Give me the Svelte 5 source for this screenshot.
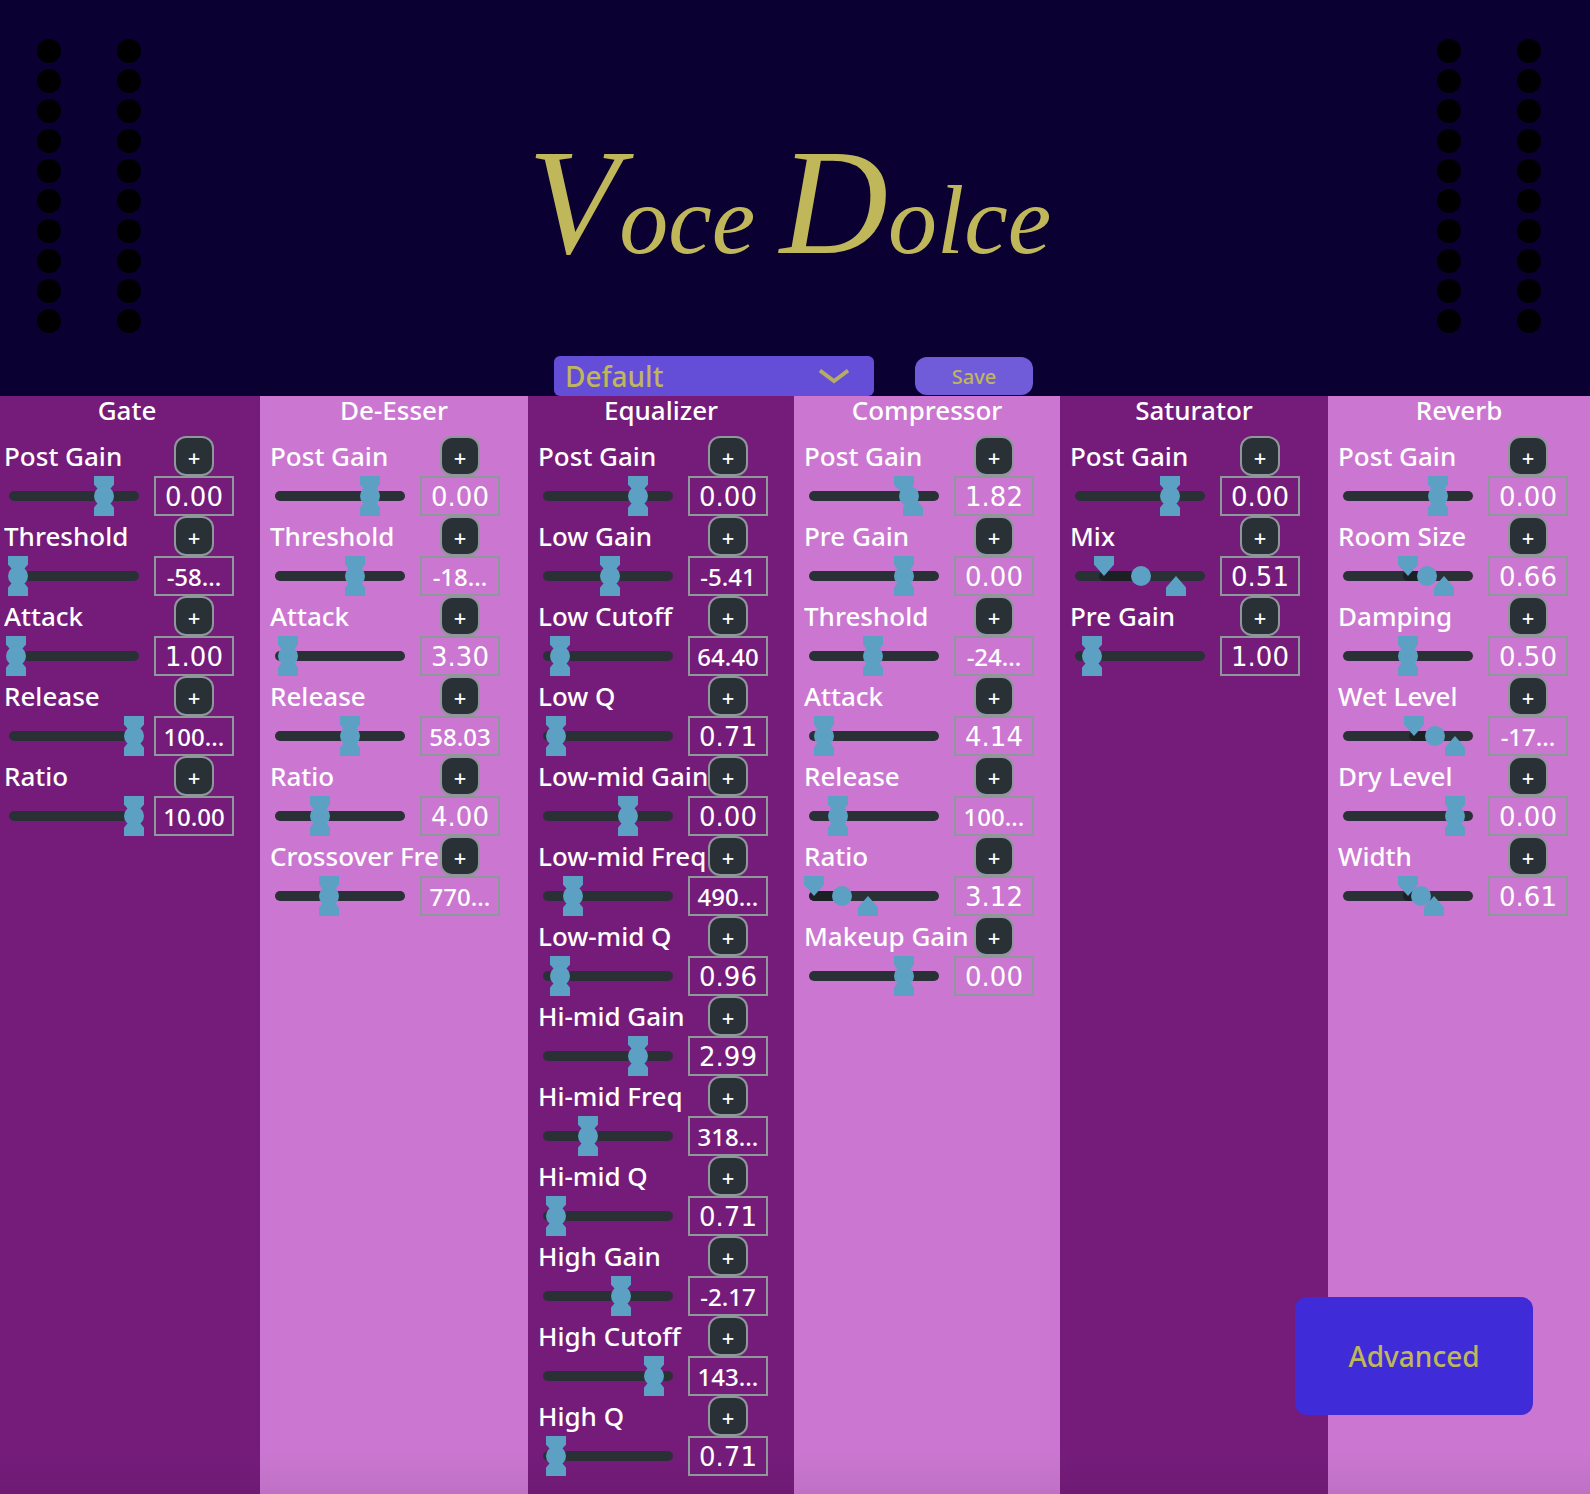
<script>
  // A control is [label, shown value, knob position, lower bound, upper bound];
  // positions run from 0 to 120, and bounds default to the knob position.
  const modules = $state(
    [
      {
        name: 'Gate',
        controls: [
          ['Post Gain', '0.00', 90],
          ['Threshold', '-58...', 4],
          ['Attack', '1.00', 2],
          ['Release', '100...', 120],
          ['Ratio', '10.00', 120]
        ]
      },
      {
        name: 'De-Esser',
        controls: [
          ['Post Gain', '0.00', 90],
          ['Threshold', '-18...', 75],
          ['Attack', '3.30', 8],
          ['Release', '58.03', 70],
          ['Ratio', '4.00', 40],
          ['Crossover Fre', '770...', 49]
        ]
      },
      {
        name: 'Equalizer',
        controls: [
          ['Post Gain', '0.00', 90],
          ['Low Gain', '-5.41', 62],
          ['Low Cutoff', '64.40', 12],
          ['Low Q', '0.71', 8],
          ['Low-mid Gain', '0.00', 80],
          ['Low-mid Freq', '490...', 25],
          ['Low-mid Q', '0.96', 12],
          ['Hi-mid Gain', '2.99', 90],
          ['Hi-mid Freq', '318...', 40],
          ['Hi-mid Q', '0.71', 8],
          ['High Gain', '-2.17', 73],
          ['High Cutoff', '143...', 106],
          ['High Q', '0.71', 8]
        ]
      },
      {
        name: 'Compressor',
        controls: [
          ['Post Gain', '1.82', 95, 90, 99],
          ['Pre Gain', '0.00', 90],
          ['Threshold', '-24...', 59],
          ['Attack', '4.14', 10],
          ['Release', '100...', 24],
          ['Ratio', '3.12', 28, 0, 54],
          ['Makeup Gain', '0.00', 90]
        ]
      },
      {
        name: 'Saturator',
        controls: [
          ['Post Gain', '0.00', 90],
          ['Mix', '0.51', 61, 24, 96],
          ['Pre Gain', '1.00', 12]
        ]
      },
      {
        name: 'Reverb',
        controls: [
          ['Post Gain', '0.00', 90],
          ['Room Size', '0.66', 79, 60, 96],
          ['Damping', '0.50', 60],
          ['Wet Level', '-17...', 87, 66, 107],
          ['Dry Level', '0.00', 107],
          ['Width', '0.61', 73, 60, 86]
        ]
      }
    ].map((m) => ({
      name: m.name,
      controls: m.controls.map(([label, text, pos, low = pos, high = pos]) => ({
        label,
        text,
        pos,
        low,
        high
      }))
    }))
  );

  let preset = $state('Default');
  const lamps = Array.from({ length: 10 });
</script>

{#snippet meter()}
  <div class="meter" aria-hidden="true">
    {#each [0, 1] as channel (channel)}
      <div class="channel">
        {#each lamps as _}
          <span class="lamp"></span>
        {/each}
      </div>
    {/each}
  </div>
{/snippet}

<div class="app">
  <header>
    {@render meter()}
    <div class="center">
      <h1><span class="initial">V</span>oce <span class="initial">D</span>olce</h1>
      <div class="presets">
        <div class="select">
          <select aria-label="Preset" bind:value={preset}>
            <option>Default</option>
          </select>
          <svg class="chevron" viewBox="0 0 30 16" aria-hidden="true">
            <path d="M1 2.5 L15 13 L29 2.5" fill="none" stroke="currentColor" stroke-width="3.8" />
          </svg>
        </div>
        <button class="save" type="button">Save</button>
      </div>
    </div>
    {@render meter()}
  </header>

  <main>
    {#each modules as module, m (module.name)}
      <section>
        <h2>{module.name}</h2>
        {#each module.controls as c, i (c.label)}
          <div class="control">
            <div class="line">
              <label for="c{m}-{i}">{c.label}</label>
              <button class="plus" type="button" aria-label="Expand {c.label}">+</button>
            </div>
            <div class="line">
              <div class="slider">
                <div class="track">
                  <span
                    class="range"
                    style="left: {c.low}px; width: {Math.max(c.pos - c.low, 0) + 5}px"
                  ></span>
                </div>
                <input class="low" type="range" min="0" max="120" aria-label="{c.label} lower bound" bind:value={c.low} />
                <input class="high" type="range" min="0" max="120" aria-label="{c.label} upper bound" bind:value={c.high} />
                <input class="knob" type="range" min="0" max="120" id="c{m}-{i}" bind:value={c.pos} />
              </div>
              <input
                class="value"
                class:long={c.text.length > 4}
                type="text"
                aria-label="{c.label} value"
                bind:value={c.text}
              />
            </div>
          </div>
        {/each}
      </section>
    {/each}
  </main>

  <button class="advanced" type="button">Advanced</button>
</div>

<style>
  :global(body) {
    margin: 0;
    background: #0a0132;
  }

  .app {
    --gold: #c0b75b;
    --slate: #2a3136;
    --blue: #5ca0c4;
    --grey: #8e989b;
    position: relative;
    display: flex;
    flex-direction: column;
    min-height: 100vh;
    font-family: 'Noto Sans', 'Open Sans', sans-serif;
    font-weight: 500;
    color: #fff;
  }

  button,
  select,
  input {
    box-sizing: border-box;
    margin: 0;
    padding: 0;
    border: 0;
    font: inherit;
    color: inherit;
  }

  button {
    cursor: pointer;
  }

  header {
    display: flex;
    justify-content: space-between;
    height: 396px;
    padding: 0 49px 0 37px;
    background: #0a0132;
    box-sizing: border-box;
  }

  .meter {
    display: flex;
    gap: 56px;
    padding-top: 39px;
  }

  .channel {
    display: flex;
    flex-direction: column;
    gap: 6px;
  }

  .lamp {
    width: 24px;
    height: 24px;
    border-radius: 50%;
    background: #000;
  }

  .center {
    display: flex;
    flex-direction: column;
    align-items: center;
    justify-content: space-between;
    padding-left: 9px;
  }

  h1 {
    margin: 0;
    padding: 122px 8px 0 0;
    font: italic 400 98px/160px 'Liberation Serif', serif;
    color: var(--gold);
    white-space: nowrap;
  }

  .initial {
    font-size: 150px;
  }

  .presets {
    display: flex;
    align-items: center;
    gap: 41px;
    color: var(--gold);
  }

  .select {
    display: grid;
    align-items: center;
    width: 320px;
    height: 40px;
    border-radius: 6px;
    background: #644ed8;
  }

  .select select {
    grid-area: 1 / 1;
    width: 100%;
    height: 40px;
    padding-left: 11px;
    appearance: none;
    background: transparent;
    font-size: 28px;
    line-height: 40px;
  }

  .chevron {
    grid-area: 1 / 1;
    justify-self: end;
    width: 30px;
    height: 16px;
    margin-right: 25px;
    opacity: 0.9;
    pointer-events: none;
  }

  .save {
    width: 118px;
    height: 38px;
    border-radius: 12px;
    background: #705cd8;
    font-size: 20px;
  }

  main {
    flex: 1;
    display: grid;
    grid-template-columns: 260fr 268fr 266fr 266fr 268fr 262fr;
  }

  section {
    padding: 0 0 16px 10px;
    background: linear-gradient(to top, rgba(0, 0, 0, 0.06), transparent 44px) #751c7b;
  }

  section:nth-child(even) {
    background: linear-gradient(to top, rgba(0, 0, 0, 0.06), transparent 44px) #cb77d1;
  }

  section:first-child {
    padding: 0 6px 16px 4px;
  }

  h2 {
    margin: 0 0 12px;
    padding-right: 10px;
    font-size: 26px;
    font-weight: 500;
    line-height: 28px;
    text-align: center;
  }

  section:first-child h2 {
    padding-right: 4px;
  }

  .line {
    display: flex;
    height: 40px;
  }

  label {
    width: 170px;
    overflow: hidden;
    font-size: 26px;
    line-height: 40px;
    white-space: nowrap;
  }

  .plus {
    width: 40px;
    height: 40px;
    padding-top: 2px;
    border: 2px solid var(--grey);
    border-radius: 12px;
    background: var(--slate);
    font-size: 22px;
    line-height: 34px;
  }

  .slider {
    display: grid;
    align-items: center;
    width: 140px;
    height: 40px;
    margin-right: 10px;
  }

  .slider > * {
    grid-area: 1 / 1;
  }

  .track {
    position: relative;
    height: 10px;
    margin: 0 5px;
    border-radius: 5px;
    background: var(--slate);
    overflow: hidden;
  }

  .range {
    position: absolute;
    top: 0;
    bottom: 0;
    border-radius: 5px 0 0 5px;
    background: #1a2023;
  }

  .slider input {
    z-index: 1;
    width: 140px;
    height: 20px;
    appearance: none;
    background: transparent;
    pointer-events: none;
  }

  .slider input::-webkit-slider-runnable-track {
    height: 20px;
    background: transparent;
  }

  .slider input::-webkit-slider-thumb {
    appearance: none;
    width: 20px;
    height: 20px;
    background: var(--blue);
    pointer-events: auto;
  }

  .slider .low {
    align-self: start;
  }

  .slider .high {
    align-self: end;
  }

  .slider .low::-webkit-slider-thumb {
    clip-path: polygon(0 0, 100% 0, 100% 42%, 50% 100%, 0 42%);
  }

  .slider .high::-webkit-slider-thumb {
    clip-path: polygon(50% 0, 100% 58%, 100% 100%, 0 100%, 0 58%);
  }

  .slider .knob::-webkit-slider-thumb {
    border-radius: 50%;
  }

  .value {
    width: 80px;
    height: 40px;
    padding-top: 2px;
    border: 2px solid var(--grey);
    background: transparent;
    font-family: 'DejaVu Sans', sans-serif;
    font-size: 26px;
    text-align: center;
  }

  .value.long {
    padding-top: 0;
    font-family: 'Noto Sans', sans-serif;
    font-size: 24px;
  }

  .advanced {
    position: absolute;
    right: 57px;
    bottom: 79px;
    width: 238px;
    height: 118px;
    border-radius: 12px;
    background: #3f2bd8;
    color: var(--gold);
    font-size: 28px;
  }
</style>
